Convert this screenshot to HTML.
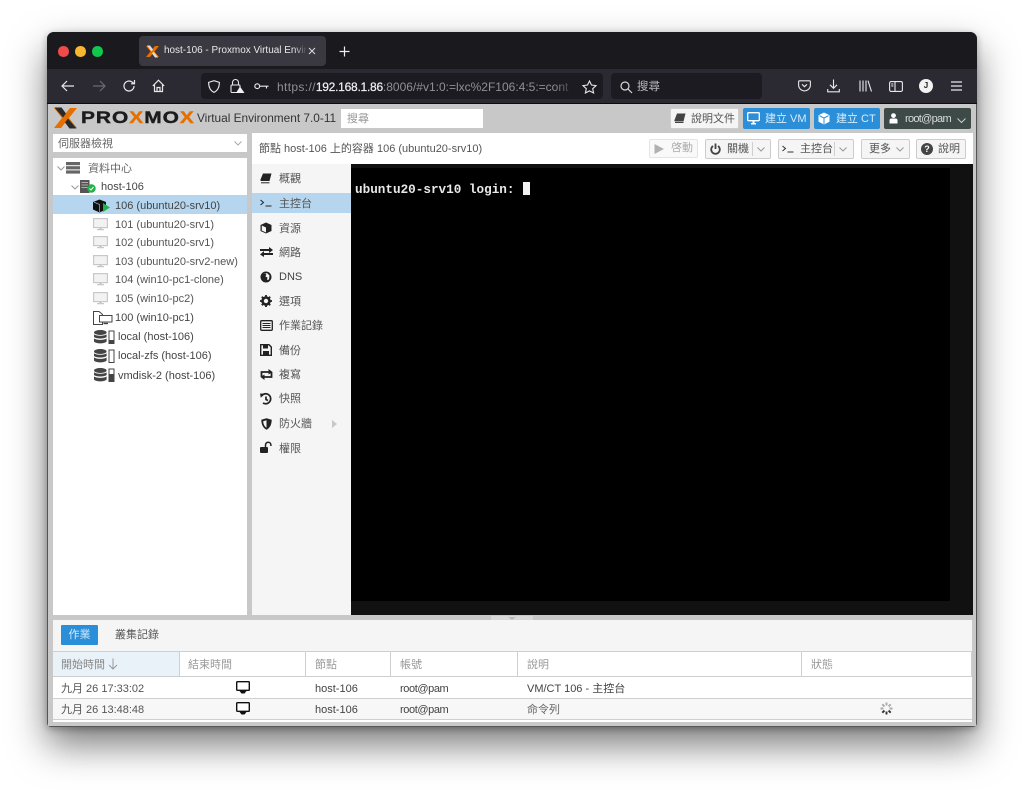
<!DOCTYPE html>
<html><head><meta charset="utf-8">
<style>
html,body{margin:0;padding:0;width:1024px;height:790px;overflow:hidden;background:#fff}
*{box-sizing:border-box}
body{font-family:"Liberation Sans","Noto Sans CJK TC",sans-serif;font-size:11px;color:#444}
#w{position:absolute;left:0;top:0;width:1024px;height:790px;filter:blur(.35px)}
.a{position:absolute}
.t{position:absolute;white-space:nowrap;line-height:14px}
svg{position:absolute;overflow:visible}
.btn{position:absolute;height:20px;border:1px solid #cfcfcf;background:#f5f5f5;border-radius:2px;white-space:nowrap;line-height:18px;color:#555;font-size:11px}
.blue{background:#2a8fd8;border-color:#2a8fd8;color:#d8ecfa;height:21px;line-height:20px;top:108px}
.line{position:absolute;background:#cfcfcf}
</style></head><body><div id="w">
<div class="a" style="left:47px;top:32px;width:930px;height:695px;border-radius:7px 7px 4px 4px;background:#c8c8c8;box-shadow:0 18px 38px rgba(0,0,0,.52),0 2px 8px rgba(0,0,0,.3);overflow:hidden;outline:1px solid #555;outline-offset:-1px"></div>

<!-- title bar -->
<div class="a" style="left:47px;top:32px;width:930px;height:37px;background:#1a191e;border-radius:7px 7px 0 0"></div>
<div class="a" style="left:58px;top:46px;width:10.5px;height:10.5px;border-radius:50%;background:#f04a4a"></div>
<div class="a" style="left:75px;top:46px;width:10.5px;height:10.5px;border-radius:50%;background:#f7b733"></div>
<div class="a" style="left:92px;top:46px;width:10.5px;height:10.5px;border-radius:50%;background:#0fc84c"></div>
<div class="a" style="left:139px;top:36px;width:187px;height:30px;border-radius:4px;background:#3a3942"></div>
<svg style="left:145px;top:45px" width="15" height="13" viewBox="0 0 15 13"><path d="M1 1L5 1L14 12L10 12Z" fill="#e57000"/><path d="M14 1L10 1L1 12L5 12Z" fill="#e57000"/><path d="M2 0.5L5 0.5L8 4.5L6.5 6.5ZM13 12.5L10 12.5L7 8.5L8.5 6.5Z" fill="#ddd"/></svg>
<div class="t" style="left:164px;top:44px;width:143px;overflow:hidden;color:#e8e8ea;font-size:9.95px">host-106 - Proxmox Virtual Envir</div>
<div class="a" style="left:294px;top:44px;width:13px;height:14px;background:linear-gradient(90deg,rgba(58,57,66,0),#3a3942)"></div>
<svg style="left:308px;top:47px" width="8" height="8"><path d="M1 1L7 7M7 1L1 7" stroke="#ddd" stroke-width="1"/></svg>
<svg style="left:339px;top:46px" width="11" height="11"><path d="M5.5 0.5V10.5M0.5 5.5H10.5" stroke="#eee" stroke-width="1.2"/></svg>

<!-- toolbar -->
<div class="a" style="left:47px;top:69px;width:930px;height:34px;background:#2b2a33"></div>
<div class="a" style="left:47px;top:103px;width:930px;height:1px;background:#0c0c0d"></div>
<svg style="left:61px;top:80px" width="14" height="12" fill="none" stroke="#e8e8ea" stroke-width="1.2"><path d="M1 6H13M6 1L1 6L6 11"/></svg>
<svg style="left:92px;top:80px" width="14" height="12" fill="none" stroke="#6b6a72" stroke-width="1.2"><path d="M1 6H13M8 1L13 6L8 11"/></svg>
<svg style="left:122px;top:79px" width="14" height="14" fill="none" stroke="#e8e8ea" stroke-width="1.2"><path d="M12 7A5 5 0 1 1 10 3L12 4.5M12.5 1V4.8H9"/></svg>
<svg style="left:152px;top:79px" width="13" height="14" fill="none" stroke="#e8e8ea" stroke-width="1.2"><path d="M0.8 7L6.5 1.2L12.2 7M2.5 5.5V12.5H10.5V5.5M5 12.5V8.5H8V12.5"/></svg>
<div class="a" style="left:201px;top:73px;width:402px;height:26px;border-radius:4px;background:#1c1b22"></div>
<svg style="left:208px;top:80px" width="12" height="13" fill="none" stroke="#e8e8ea" stroke-width="1.1"><path d="M6 .7L11.4 2.4C11.4 7 10 10.5 6 12.4C2 10.5 .6 7 .6 2.4Z"/></svg>
<svg style="left:230px;top:79px" width="15" height="15"><path d="M2.5 6V3.5a3 3 0 0 1 6 0V6" fill="none" stroke="#e8e8ea" stroke-width="1.1"/><rect x="1" y="6" width="9" height="7.5" rx="1" fill="none" stroke="#e8e8ea" stroke-width="1.1"/><path d="M10 7.5L14.5 14H6Z" fill="#f2f2f2"/></svg>
<svg style="left:254px;top:83px" width="15" height="7" fill="none" stroke="#e8e8ea" stroke-width="1.1"><circle cx="3.2" cy="3.2" r="2.4"/><path d="M5.6 3.2H14.5M12.5 3.2V5.5"/></svg>
<div class="t" style="left:277px;top:80px;width:298px;overflow:hidden;color:#8f8f97;font-size:12px"><span style="letter-spacing:.35px">https://</span><span style="color:#f2f2f4;letter-spacing:-.25px;-webkit-text-stroke:.2px #f2f2f4">192.168.1.86</span>:8006/#v1:0:=lxc%2F106:4:5:=cont</div>
<div class="a" style="left:555px;top:78px;width:21px;height:16px;background:linear-gradient(90deg,rgba(28,27,34,0),#1c1b22)"></div>
<svg style="left:582px;top:80px" width="15" height="14" fill="none" stroke="#e8e8ea" stroke-width="1.1"><path d="M7.5 1L9.5 5L14 5.6L10.7 8.7L11.6 13L7.5 10.9L3.4 13L4.3 8.7L1 5.6L5.5 5Z"/></svg>
<div class="a" style="left:611px;top:73px;width:151px;height:26px;border-radius:4px;background:#1c1b22"></div>
<svg style="left:620px;top:81px" width="13" height="13" fill="none" stroke="#d8d8da" stroke-width="1.2"><circle cx="5" cy="5" r="4"/><path d="M8 8L12 12"/></svg>
<div class="t" style="left:637px;top:80px;color:#b5b5ba;font-size:11.5px">搜尋</div>
<svg style="left:798px;top:80px" width="13" height="12" fill="none" stroke="#e8e8ea" stroke-width="1.1"><path d="M1.5 .8H11.5Q12.4 .8 12.4 1.8V5A5.9 5.9 0 0 1 .6 5V1.8Q.6 .8 1.5 .8ZM4 4.3L6.5 6.7L9 4.3"/></svg>
<svg style="left:827px;top:79px" width="13" height="14" fill="none" stroke="#e8e8ea" stroke-width="1.1"><path d="M6.5 .5V9M3 5.8L6.5 9.3L10 5.8M.7 10V12.8H12.3V10"/></svg>
<svg style="left:859px;top:80px" width="13" height="12" fill="none" stroke="#e8e8ea" stroke-width="1.1"><path d="M1 0.5V11.5M4 0.5V11.5M7 0.5V11.5M9 .7L12.5 11.5"/></svg>
<svg style="left:889px;top:81px" width="14" height="11" fill="none" stroke="#e8e8ea" stroke-width="1.1"><rect x=".6" y=".6" width="12.8" height="9.8" rx="1.5"/><path d="M6 .6V10.4M2.2 3H4.4M2.2 5H4.4"/></svg>
<div class="a" style="left:919px;top:79px;width:14px;height:14px;border-radius:50%;background:#f2f2f2;color:#222;font-size:8px;font-weight:700;text-align:center;line-height:14px">J</div>
<svg style="left:951px;top:81px" width="11" height="10" stroke="#e8e8ea" stroke-width="1.2"><path d="M0 1H11M0 5H11M0 9H11"/></svg>

<!-- PVE top -->
<div class="a" style="left:48px;top:104px;width:928px;height:622px;background:#c8c8c8"></div>
<svg style="left:53px;top:107px" width="25" height="22" viewBox="0 0 25 22"><path d="M1 1H8L24 21H17Z" fill="#e57000"/><path d="M24 1H17L1 21H8Z" fill="#e57000"/><path d="M1.5 0.5H8.5L13 6.5L10 10.5ZM23.5 21.5H16.5L12 15.5L15 11.5Z" fill="#2a2a2a"/></svg>
<div class="t" style="left:81px;top:108px;font-size:17px;line-height:20px;font-weight:700;color:#1c1c1c;letter-spacing:.8px;-webkit-text-stroke:.4px #1c1c1c;transform-origin:0 50%;transform:scaleX(1.23)">PRO<span style="color:#e57000;-webkit-text-stroke:.4px #e57000">X</span>MO<span style="color:#e57000;-webkit-text-stroke:.4px #e57000">X</span></div>
<div class="t" style="left:197px;top:111px;font-size:11.85px;color:#333">Virtual Environment 7.0-11</div>
<div class="a" style="left:341px;top:109px;width:142px;height:19px;background:#fff"></div>
<div class="t" style="left:347px;top:112px;color:#999">搜尋</div>

<div class="btn" style="left:670px;top:108px;width:69px;height:21px;line-height:20px;background:#f5f5f5;padding-left:20px">說明文件</div>
<svg style="left:674px;top:113px" width="12" height="11"><path d="M3 .5H11.5L9.5 8.5H1.5Q0 8.5 .5 7Z" fill="#444"/><path d="M1 9.5H9.5" stroke="#444"/></svg>
<div class="btn blue" style="left:743px;width:67px;padding-left:21px">建立 VM</div>
<svg style="left:747px;top:112px" width="13" height="13"><rect x=".7" y=".7" width="11.6" height="8" rx="1" fill="none" stroke="#fff" stroke-width="1.3"/><path d="M4 11H9V12.5H4ZM5.5 9H7.5V11H5.5Z" fill="#fff"/></svg>
<div class="btn blue" style="left:814px;width:66px;padding-left:21px">建立 CT</div>
<svg style="left:818px;top:112px" width="12" height="13"><path d="M6 0.5L11.5 3.2V9.8L6 12.5L.5 9.8V3.2Z" fill="#fff"/><path d="M1.5 3.7L6 6V12M6 6L10.5 3.7" fill="none" stroke="#2a8fd8"/></svg>
<div class="btn" style="left:884px;top:108px;width:87px;height:21px;line-height:20px;background:#3d4a48;border-color:#3d4a48;color:#d8dcdc;padding-left:20px;letter-spacing:-.7px">root@pam</div>
<svg style="left:889px;top:113px" width="9" height="11"><circle cx="4.5" cy="2.6" r="2.4" fill="#fff"/><path d="M.5 10.5V7.5Q.5 5.5 2.5 5.5H6.5Q8.5 5.5 8.5 7.5V10.5Z" fill="#fff"/></svg>
<svg style="left:957px;top:118px" width="9" height="5" fill="none" stroke="#ccc"><path d="M.5 .5L4.5 4.5L8.5 .5"/></svg>

<!-- left panel -->
<div class="a" style="left:53px;top:134px;width:194px;height:18px;background:#fff"></div>
<div class="t" style="left:58px;top:137px;color:#666;font-size:11px">伺服器檢視</div>
<svg style="left:234px;top:141px" width="8" height="5" fill="none" stroke="#aaa"><path d="M.5 .5L4 4L7.5 .5"/></svg>
<div class="a" style="left:53px;top:158px;width:194px;height:457px;background:#fff"></div>
<div class="a" style="left:53px;top:195px;width:194px;height:19px;background:#b5d6ee"></div>
<svg style="left:57px;top:166px" width="8" height="5" fill="none" stroke="#999"><path d="M.5 .5L4 4L7.5 .5"/></svg>
<svg style="left:66px;top:162px" width="14" height="12" fill="#666"><rect width="14" height="3.2"/><rect y="4.2" width="14" height="3.2"/><rect y="8.4" width="14" height="3.2"/></svg>
<div class="t" style="left:88px;top:162px;color:#666">資料中心</div>
<svg style="left:71px;top:185px" width="8" height="5" fill="none" stroke="#999"><path d="M.5 .5L4 4L7.5 .5"/></svg>
<svg style="left:80px;top:180px" width="17" height="14"><rect width="9.5" height="13" fill="#555"/><path d="M1.5 2.5H8M1.5 5H8M1.5 7.5H8" stroke="#ccc" stroke-width=".8"/><circle cx="11.5" cy="8.5" r="4.2" fill="#21b04b"/><path d="M9.5 8.5L11 10L13.5 7" stroke="#fff" fill="none"/></svg>
<div class="t" style="left:101px;top:180px;color:#444">host-106</div>

<svg style="left:93px;top:199px" width="18" height="14"><path d="M6.5 .5L13 3V10.5L6.5 13.5L0 10.5V3Z" fill="#111"/><path d="M1 3.2L6.5 5.5V13" stroke="#b5d6ee" stroke-width=".6" fill="none"/><path d="M10 4L17 8.5L10 13Z" fill="#21b04b"/></svg>
<div class="t" style="left:115px;top:199px;color:#444">106 (ubuntu20-srv10)</div>
<svg style="left:93px;top:218px" width="15" height="13"><rect x=".6" y=".6" width="13.8" height="9" fill="#f2f2f2" stroke="#c8c8c8" stroke-width="1.2"/><path d="M4 11H11V12.2H4ZM6.2 9.5H8.8V11H6.2Z" fill="#c8c8c8"/></svg>
<div class="t" style="left:115px;top:218px;color:#555">101 (ubuntu20-srv1)</div>
<svg style="left:93px;top:236px" width="15" height="13"><rect x=".6" y=".6" width="13.8" height="9" fill="#f2f2f2" stroke="#c8c8c8" stroke-width="1.2"/><path d="M4 11H11V12.2H4ZM6.2 9.5H8.8V11H6.2Z" fill="#c8c8c8"/></svg>
<div class="t" style="left:115px;top:236px;color:#555">102 (ubuntu20-srv1)</div>
<svg style="left:93px;top:255px" width="15" height="13"><rect x=".6" y=".6" width="13.8" height="9" fill="#f2f2f2" stroke="#c8c8c8" stroke-width="1.2"/><path d="M4 11H11V12.2H4ZM6.2 9.5H8.8V11H6.2Z" fill="#c8c8c8"/></svg>
<div class="t" style="left:115px;top:255px;color:#555">103 (ubuntu20-srv2-new)</div>
<svg style="left:93px;top:273px" width="15" height="13"><rect x=".6" y=".6" width="13.8" height="9" fill="#f2f2f2" stroke="#c8c8c8" stroke-width="1.2"/><path d="M4 11H11V12.2H4ZM6.2 9.5H8.8V11H6.2Z" fill="#c8c8c8"/></svg>
<div class="t" style="left:115px;top:273px;color:#555">104 (win10-pc1-clone)</div>
<svg style="left:93px;top:292px" width="15" height="13"><rect x=".6" y=".6" width="13.8" height="9" fill="#f2f2f2" stroke="#c8c8c8" stroke-width="1.2"/><path d="M4 11H11V12.2H4ZM6.2 9.5H8.8V11H6.2Z" fill="#c8c8c8"/></svg>
<div class="t" style="left:115px;top:292px;color:#555">105 (win10-pc2)</div>
<svg style="left:93px;top:311px" width="20" height="14" fill="none" stroke="#444"><path d="M.5 .5H6L9.5 3.5V13.5H.5Z" fill="#fff"/><rect x="6.5" y="4.5" width="12.5" height="6.5" fill="#fff"/><path d="M10.5 12.5H15" stroke-width="1.4"/></svg>
<div class="t" style="left:115px;top:311px;color:#444">100 (win10-pc1)</div>

<svg style="left:94px;top:330px" width="21" height="15"><g fill="#444"><ellipse cx="6.3" cy="2.5" rx="6.3" ry="2.5"/><path d="M0 4.2C2 6.2 10.6 6.2 12.6 4.2V7C10.6 9 2 9 0 7Z"/><path d="M0 8.4C2 10.4 10.6 10.4 12.6 8.4V11.5C10.6 14 2 14 0 11.5Z"/></g><rect x="15" y="1" width="5" height="12.5" fill="#fff" stroke="#444"/><rect x="15" y="10" width="5" height="3.5" fill="#444"/></svg>
<div class="t" style="left:118px;top:330px;color:#444">local (host-106)</div>
<svg style="left:94px;top:349px" width="21" height="15"><g fill="#444"><ellipse cx="6.3" cy="2.5" rx="6.3" ry="2.5"/><path d="M0 4.2C2 6.2 10.6 6.2 12.6 4.2V7C10.6 9 2 9 0 7Z"/><path d="M0 8.4C2 10.4 10.6 10.4 12.6 8.4V11.5C10.6 14 2 14 0 11.5Z"/></g><rect x="15" y="1" width="5" height="12.5" fill="#fff" stroke="#444"/></svg>
<div class="t" style="left:118px;top:349px;color:#444">local-zfs (host-106)</div>
<svg style="left:94px;top:368px" width="21" height="15"><g fill="#444"><ellipse cx="6.3" cy="2.5" rx="6.3" ry="2.5"/><path d="M0 4.2C2 6.2 10.6 6.2 12.6 4.2V7C10.6 9 2 9 0 7Z"/><path d="M0 8.4C2 10.4 10.6 10.4 12.6 8.4V11.5C10.6 14 2 14 0 11.5Z"/></g><rect x="15" y="1" width="5" height="12.5" fill="#fff" stroke="#444"/><rect x="15" y="6" width="5" height="7.5" fill="#444"/></svg>
<div class="t" style="left:118px;top:369px;color:#444">vmdisk-2 (host-106)</div>

<!-- main header -->
<div class="a" style="left:252px;top:133px;width:721px;height:31px;background:#fff"></div>
<div class="t" style="left:259px;top:142px;color:#555">節點 host-106 上的容器 106 (ubuntu20-srv10)</div>
<div class="btn" style="left:649px;top:139px;width:49px;height:19px;line-height:17px;color:#aaa;padding-left:21px;background:#f9f9f9;border-color:#e4e4e4">啓動</div>
<svg style="left:654px;top:144px" width="11" height="10"><path d="M.5 0L10 5L.5 10Z" fill="#b0b0b0"/></svg>
<div class="btn" style="left:705px;top:139px;width:66px;height:20px;padding-left:21px;border-color:#ccc">關機</div>
<svg style="left:710px;top:143px" width="11" height="12" fill="none" stroke="#444" stroke-width="1.8"><path d="M3 3A4.3 4.3 0 1 0 8 3M5.5 .5V6"/></svg>
<div class="line" style="left:752px;top:142px;width:1px;height:14px"></div>
<svg style="left:757px;top:147px" width="8" height="5" fill="none" stroke="#999"><path d="M.5 .5L4 4L7.5 .5"/></svg>
<div class="btn" style="left:778px;top:139px;width:76px;height:20px;padding-left:21px;border-color:#ccc">主控台</div>
<svg style="left:782px;top:145px" width="12" height="8" fill="none" stroke="#333"><path d="M.5 1L3.5 3.5L.5 6M5.5 7H11.5"/></svg>
<div class="line" style="left:834px;top:142px;width:1px;height:14px"></div>
<svg style="left:839px;top:147px" width="8" height="5" fill="none" stroke="#999"><path d="M.5 .5L4 4L7.5 .5"/></svg>
<div class="btn" style="left:861px;top:139px;width:49px;height:20px;padding-left:7px;border-color:#ccc">更多</div>
<svg style="left:896px;top:147px" width="8" height="5" fill="none" stroke="#999"><path d="M.5 .5L4 4L7.5 .5"/></svg>
<div class="btn" style="left:916px;top:139px;width:50px;height:20px;padding-left:21px;border-color:#ccc">說明</div>
<div class="a" style="left:921px;top:143px;width:12px;height:12px;border-radius:50%;background:#444;color:#fff;font-size:9px;font-weight:700;text-align:center;line-height:12px">?</div>

<!-- menu -->
<div class="a" style="left:252px;top:164px;width:99px;height:451px;background:#f5f5f5"></div>
<div class="a" style="left:252px;top:193px;width:99px;height:20px;background:#b5d6ee"></div>
<svg style="left:260px;top:173px" width="12" height="11"><path d="M3 .5H11.5L9.5 8H1.5Q0 8 .5 6.5Z" fill="#222"/><path d="M1 9.8H9.5" stroke="#222"/></svg>
<div class="t" style="left:279px;top:172px;color:#555">概觀</div>
<svg style="left:260px;top:199px" width="12" height="8" fill="none" stroke="#222"><path d="M.5 1L3.5 3.5L.5 6M5.5 7H11.5"/></svg>
<div class="t" style="left:279px;top:197px;color:#555">主控台</div>
<svg style="left:260px;top:222px" width="12" height="12"><path d="M6 .5L11.5 3V9L6 11.5L.5 9V3Z" fill="#222"/><path d="M1.8 3.5L6 5.5V10.5L1.8 8.5Z" fill="#f5f5f5"/></svg>
<div class="t" style="left:279px;top:222px;color:#555">資源</div>
<svg style="left:260px;top:247px" width="13" height="10" fill="#222"><path d="M0 2H9V0L13 3L9 6V4H0ZM13 6H4V4L0 7.5L4 10V8H13Z"/></svg>
<div class="t" style="left:279px;top:246px;color:#555">網路</div>
<svg style="left:260px;top:271px" width="12" height="12"><circle cx="6" cy="6" r="5.5" fill="#222"/><path d="M3 2L6.5 2.5L5.5 5.5L7.5 6.5L7 9L9 8.5L9.5 4.5L7 2Z" fill="#f5f5f5"/></svg>
<div class="t" style="left:279px;top:270px;color:#444">DNS</div>
<svg style="left:260px;top:295px" width="12" height="12"><circle cx="6" cy="6" r="3.5" fill="none" stroke="#222" stroke-width="2.6"/><path d="M6 0V12M0 6H12M1.8 1.8L10.2 10.2M10.2 1.8L1.8 10.2" stroke="#222" stroke-width="1.8" stroke-dasharray="2.4 7.2 2.4"/></svg>
<div class="t" style="left:279px;top:295px;color:#555">選項</div>
<svg style="left:260px;top:320px" width="13" height="11"><rect x=".7" y=".7" width="11.6" height="9.6" rx="1" fill="none" stroke="#222" stroke-width="1.3"/><path d="M2.5 3.5H10.5M2.5 5.5H10.5M2.5 7.5H10.5" stroke="#222"/></svg>
<div class="t" style="left:279px;top:319px;color:#555">作業記錄</div>
<svg style="left:260px;top:344px" width="12" height="12"><path d="M.7 .7H9L11.3 3V11.3H.7Z" fill="none" stroke="#222" stroke-width="1.4"/><rect x="3" y="1" width="5" height="3.5" fill="#222"/><rect x="3" y="7" width="6" height="4" fill="#222"/></svg>
<div class="t" style="left:279px;top:344px;color:#555">備份</div>
<svg style="left:260px;top:369px" width="13" height="11" fill="none" stroke="#222" stroke-width="1.8"><path d="M1.5 8V3H10M11.5 3V8H3"/><path d="M8.5 0L12.5 3L8.5 5.5ZM4.5 5.5L.5 8L4.5 11Z" fill="#222" stroke="none"/></svg>
<div class="t" style="left:279px;top:368px;color:#555">複寫</div>
<svg style="left:260px;top:393px" width="12" height="12" fill="none" stroke="#222" stroke-width="1.7"><path d="M1.5 3A5 5 0 1 1 3 10M6 3.5V6.5L8 7.5"/><path d="M0 .5L4.5 .8L.8 4.8Z" fill="#222" stroke="none"/></svg>
<div class="t" style="left:279px;top:392px;color:#555">快照</div>
<svg style="left:261px;top:418px" width="11" height="12"><path d="M5.5 .3L10.7 1.8C10.7 6.5 9 10 5.5 11.8C2 10 .3 6.5 .3 1.8Z" fill="#222"/><path d="M5.5 2.2V9.8C3.5 8.5 2.3 6 2.2 3.2Z" fill="#f5f5f5"/></svg>
<div class="t" style="left:279px;top:417px;color:#555">防火牆</div>
<svg style="left:332px;top:420px" width="5" height="8"><path d="M0 0L5 4L0 8Z" fill="#c8c8c8"/></svg>
<svg style="left:260px;top:442px" width="13" height="11"><rect x="0" y="5" width="8" height="6" rx="1" fill="#222"/><path d="M5.5 5V3a2.7 2.7 0 0 1 5.4 0V4" fill="none" stroke="#222" stroke-width="1.5"/></svg>
<div class="t" style="left:279px;top:442px;color:#555">權限</div>

<!-- console -->
<div class="a" style="left:351px;top:164px;width:622px;height:451px;background:#111"></div>
<div class="a" style="left:351px;top:168px;width:599px;height:433px;background:#000"></div>
<div class="t" style="left:355px;top:183px;font-family:'Liberation Mono',monospace;font-size:12.67px;font-weight:700;color:#e8e8e8">ubuntu20-srv10 login:</div>
<div class="a" style="left:523px;top:182px;width:7px;height:13px;background:#f2f2f2"></div>

<!-- splitter -->
<div class="a" style="left:491px;top:616px;width:42px;height:4px;background:#d8d8d8"></div>
<svg style="left:508px;top:617px" width="8" height="3"><path d="M0 0H8L4 3Z" fill="#bbb"/></svg>

<!-- bottom panel -->
<div class="a" style="left:53px;top:620px;width:919px;height:102px;background:#f5f5f5"></div>
<div class="a" style="left:61px;top:625px;width:37px;height:20px;background:#2a8fd8;border-radius:1px;color:#d8ecfa;text-align:center;line-height:20px">作業</div>
<div class="t" style="left:115px;top:628px;color:#555">叢集記錄</div>

<div class="a" style="left:53px;top:651px;width:919px;height:26px;background:#fff;border-top:1px solid #cfcfcf;border-bottom:1px solid #cfcfcf"></div>
<div class="a" style="left:53px;top:652px;width:126px;height:24px;background:#e9f2f9"></div>
<div class="line" style="left:179px;top:652px;width:1px;height:24px"></div>
<div class="line" style="left:305px;top:652px;width:1px;height:24px"></div>
<div class="line" style="left:390px;top:652px;width:1px;height:24px"></div>
<div class="line" style="left:517px;top:652px;width:1px;height:24px"></div>
<div class="line" style="left:801px;top:652px;width:1px;height:24px"></div>
<div class="line" style="left:971px;top:652px;width:1px;height:24px"></div>
<div class="t" style="left:61px;top:658px;color:#888">開始時間</div>
<svg style="left:108px;top:658px" width="10" height="12" fill="none" stroke="#999"><path d="M5 .5V11M1 7L5 11L9 7"/></svg>
<div class="t" style="left:188px;top:658px;color:#999">結束時間</div>
<div class="t" style="left:315px;top:658px;color:#999">節點</div>
<div class="t" style="left:400px;top:658px;color:#999">帳號</div>
<div class="t" style="left:527px;top:658px;color:#999">說明</div>
<div class="t" style="left:811px;top:658px;color:#999">狀態</div>

<div class="a" style="left:53px;top:677px;width:919px;height:21px;background:#fff"></div>
<div class="a" style="left:53px;top:698px;width:919px;height:1px;background:#cfcfcf"></div>
<div class="a" style="left:53px;top:699px;width:919px;height:20px;background:#f7f7f7"></div>
<div class="a" style="left:53px;top:719px;width:919px;height:1px;background:#cfcfcf"></div>
<div class="a" style="left:53px;top:720px;width:919px;height:2px;background:#fff"></div>

<div class="t" style="left:61px;top:682px;color:#555">九月 26 17:33:02</div>
<svg style="left:236px;top:681px" width="14" height="13"><rect x=".7" y=".7" width="12.6" height="8.6" rx=".7" fill="#fff" stroke="#111" stroke-width="1.4"/><path d="M3.5 10H10.5L8.5 12.5H5.5Z" fill="#111"/></svg>
<div class="t" style="left:315px;top:682px;color:#444">host-106</div>
<div class="t" style="left:400px;top:682px;color:#444;letter-spacing:-.4px">root@pam</div>
<div class="t" style="left:527px;top:682px;color:#444">VM/CT 106 - 主控台</div>

<div class="t" style="left:61px;top:703px;color:#555">九月 26 13:48:48</div>
<svg style="left:236px;top:702px" width="14" height="13"><rect x=".7" y=".7" width="12.6" height="8.6" rx=".7" fill="#fff" stroke="#111" stroke-width="1.4"/><path d="M3.5 10H10.5L8.5 12.5H5.5Z" fill="#111"/></svg>
<div class="t" style="left:315px;top:703px;color:#444">host-106</div>
<div class="t" style="left:400px;top:703px;color:#444;letter-spacing:-.4px">root@pam</div>
<div class="t" style="left:527px;top:703px;color:#666">命令列</div>
<svg style="left:880px;top:702px" width="13" height="13" stroke-width="1.9"><g stroke="#aaa"><path d="M6.5 .5V3.5M2.3 2.3L4.4 4.4M.5 6.5H3.5M10.7 2.3L8.6 4.4M12.5 6.5H9.5"/></g><g stroke="#333"><path d="M6.5 12.5V9.5M2.3 10.7L4.4 8.6M10.7 10.7L8.6 8.6"/></g></svg>
</div></body></html>
